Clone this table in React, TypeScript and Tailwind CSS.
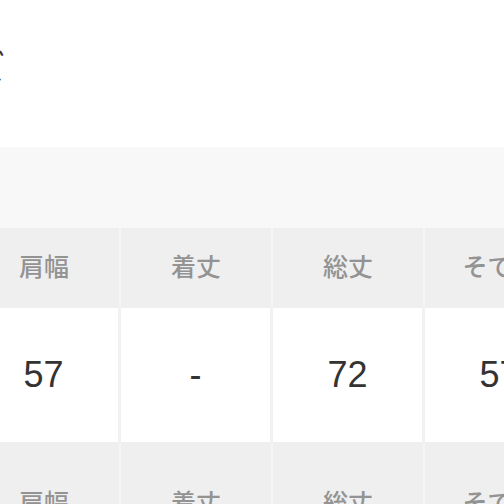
import React from "react";

const headers = ["肩幅", "着丈", "総丈", "そで丈"];
const values = ["57", "-", "72", "57"];

export default function App() {
  return (
    <div className="w-[504px] h-[504px] overflow-hidden bg-white font-['Liberation_Sans','Noto_Sans_CJK_JP',sans-serif]">
      <div className="h-[147px] pt-[46px]">
        <div className="ml-[-96px] text-[34px] leading-[44px] text-[#333] whitespace-nowrap">サイズ</div>
      </div>
      <div className="h-[81px] bg-[#f8f8f8]" />
      <div className="ml-[-31px] grid grid-cols-[repeat(4,152px)] w-[608px]">
        {headers.map((h) => (
          <div
            key={"h1" + h}
            className="h-[80px] bg-[#efefef] border-r-2 border-[#f4f4f4] flex items-center justify-center text-[25px] font-medium text-[#939393]"
          >
            {h}
          </div>
        ))}
        {values.map((v, i) => (
          <div
            key={"v" + i}
            className="h-[134px] bg-white border-r-[3px] border-[#f1f1f1] flex items-center justify-center text-[36px] text-[#333]"
          >
            {v}
          </div>
        ))}
        {headers.map((h) => (
          <div
            key={"h2" + h}
            className="h-[80px] bg-[#efefef] border-r-2 border-[#f4f4f4] flex justify-center pt-[45px] text-[25px] font-medium leading-[32px] text-[#939393]"
          >
            {h}
          </div>
        ))}
      </div>
    </div>
  );
}
